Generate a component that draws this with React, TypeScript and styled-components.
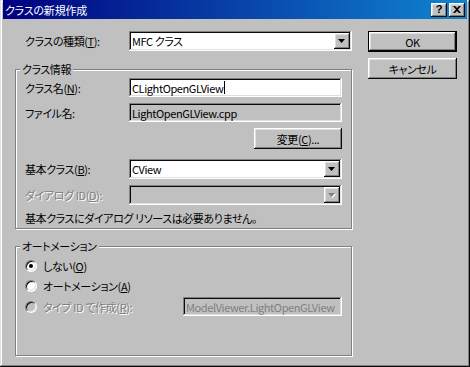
import styled, { createGlobalStyle } from 'styled-components';

const GlobalStyle = createGlobalStyle`
  html, body {
    margin: 0;
    padding: 0;
    background: #c0c0c0;
  }
  body {
    font-family: "Noto Sans CJK JP", "Liberation Sans", sans-serif;
    font-size: 11px;
    letter-spacing: -0.4px;
    font-feature-settings: "palt";
    color: #000;
  }
  u {
    text-underline-offset: 1px;
  }
`;

const raised = `
  box-shadow: inset -1px -1px #0a0a0a, inset 1px 1px #fff,
    inset -2px -2px #808080, inset 2px 2px #dfdfdf;
`;

const sunken = `
  box-shadow: inset -1px -1px #fff, inset 1px 1px #808080,
    inset -2px -2px #dfdfdf, inset 2px 2px #0a0a0a;
`;

const Window = styled.div`
  width: 470px;
  height: 367px;
  box-sizing: border-box;
  padding: 0 3px 3px 3px;
  background: #c0c0c0;
  box-shadow: inset -1px -1px #0a0a0a, inset 1px 1px #dfdfdf,
    inset -2px -2px #808080, inset 2px 2px #fff;
  display: flex;
  flex-direction: column;
`;

const TitleBar = styled.div`
  height: 19px;
  flex-shrink: 0;
  display: flex;
  align-items: center;
  justify-content: space-between;
  padding: 0 2px 0 2px;
  background: linear-gradient(90deg, #000080, #1084d0);
`;

const TitleText = styled.span`
  color: #fff;
  font-size: 11px;
  line-height: 14px;
  letter-spacing: -0.2px;
`;

const TitleButtons = styled.div`
  display: flex;
  gap: 2px;
`;

const TitleButton = styled.button`
  width: 16px;
  height: 14px;
  padding: 0;
  border: 0;
  background: #c0c0c0;
  ${raised}
  display: flex;
  align-items: center;
  justify-content: center;
  font: bold 11px "Liberation Sans", sans-serif;
  line-height: 11px;
  color: #000;
`;

const Body = styled.div`
  display: flex;
  padding: 12px 10px 0 12px;
`;

const Main = styled.div`
  width: 337px;
  display: flex;
  flex-direction: column;
`;

const Side = styled.div`
  margin-left: 16px;
  width: 89px;
  display: flex;
  flex-direction: column;
  gap: 6px;
`;

const FieldRow = styled.div<{ $mt?: number; $pl?: number }>`
  display: grid;
  grid-template-columns: 104px 1fr;
  align-items: center;
  margin-top: ${p => p.$mt ?? 0}px;
  padding-left: ${p => p.$pl ?? 0}px;
`;

const Label = styled.span<{ $disabled?: boolean }>`
  line-height: 14px;
  white-space: nowrap;
  color: ${p => (p.$disabled ? '#808080' : '#000')};
  text-shadow: ${p => (p.$disabled ? '1px 1px 0 #fff' : 'none')};
`;

const Field = styled.div<{ $gray?: boolean; $dim?: boolean; $w?: number }>`
  height: 19px;
  width: ${p => (p.$w ? `${p.$w}px` : 'auto')};
  box-sizing: border-box;
  padding: 2px 2px 2px 3px;
  background: ${p => (p.$gray ? '#c0c0c0' : '#fff')};
  color: ${p => (p.$dim ? '#808080' : '#000')};
  ${sunken}
  display: flex;
  align-items: center;
  line-height: 14px;
  white-space: nowrap;
  overflow: hidden;
`;

const Caret = styled.span`
  width: 1px;
  height: 13px;
  background: #000;
  margin-left: 1px;
`;

const Combo = styled(Field)`
  height: 20px;
  justify-content: space-between;
`;

const DropButton = styled.span`
  width: 16px;
  height: 16px;
  flex-shrink: 0;
  background: #c0c0c0;
  ${raised}
  display: flex;
  align-items: center;
  justify-content: center;
`;

const PushButton = styled.button<{ $default?: boolean; $w?: number }>`
  width: ${p => (p.$w ? `${p.$w}px` : '100%')};
  height: 21px;
  padding: 0;
  box-sizing: border-box;
  background: #c0c0c0;
  font: inherit;
  letter-spacing: inherit;
  line-height: 14px;
  color: #000;
  border: ${p => (p.$default ? '1px solid #000' : 'none')};
  ${raised}
`;

const ButtonRow = styled.div<{ $mt?: number }>`
  display: flex;
  justify-content: flex-end;
  margin-top: ${p => p.$mt ?? 0}px;
`;

const Group = styled.fieldset<{ $mt: number; $pb: number }>`
  margin: ${p => p.$mt}px 0 0 0;
  padding: 2px 9px ${p => p.$pb}px 9px;
  border: 1px solid #808080;
  box-shadow: inset 1px 1px #fff, 1px 1px #fff;
  min-width: 0;
`;

const GroupTitle = styled.legend`
  padding: 0 2px;
  margin-left: -5px;
  line-height: 14px;
  background: #c0c0c0;
`;

const Note = styled.div`
  margin-top: 6px;
  line-height: 14px;
  white-space: nowrap;
`;

const RadioRow = styled.div<{ $mt?: number; $h?: number }>`
  display: flex;
  align-items: center;
  height: ${p => p.$h ?? 14}px;
  margin-top: ${p => p.$mt ?? 0}px;
`;

const RadioLabel = styled.label<{ $disabled?: boolean }>`
  display: flex;
  align-items: center;
  gap: 6px;
  line-height: 14px;
  color: ${p => (p.$disabled ? '#808080' : '#000')};
  text-shadow: ${p => (p.$disabled ? '1px 1px 0 #fff' : 'none')};
`;

const RadioCircle = styled.span<{ $checked?: boolean; $disabled?: boolean }>`
  width: 12px;
  height: 12px;
  box-sizing: border-box;
  border-radius: 50%;
  border: 1px solid;
  border-color: #808080 #fff #fff #808080;
  box-shadow: inset 1px 1px #0a0a0a, inset -1px -1px #dfdfdf;
  background: ${p => (p.$disabled ? '#c0c0c0' : '#fff')};
  display: flex;
  align-items: center;
  justify-content: center;
  text-shadow: none;

  &::after {
    content: '';
    width: 4px;
    height: 4px;
    border-radius: 50%;
    background: #000;
    display: ${p => (p.$checked ? 'block' : 'none')};
  }
`;

const Spacer = styled.div`
  flex: 1;
`;

const DownArrow = ({ disabled }: { disabled?: boolean }) => (
  <svg width="8" height="5" viewBox="0 0 8 5">
    {disabled && <path d="M1 1h7L4.5 5z" fill="#fff" />}
    <path d="M0 0h7L3.5 4z" fill={disabled ? '#808080' : '#000'} />
  </svg>
);

const CloseGlyph = () => (
  <svg width="8" height="7" viewBox="0 0 8 7">
    <path d="M0 0h2l2 2 2-2h2L5 3.5 8 7H6L4 5 2 7H0l3-3.5z" fill="#000" />
  </svg>
);

const App = () => {
  return (
    <>
      <GlobalStyle />
      <Window>
        <TitleBar>
          <TitleText>クラスの新規作成</TitleText>
          <TitleButtons>
            <TitleButton>?</TitleButton>
            <TitleButton>
              <CloseGlyph />
            </TitleButton>
          </TitleButtons>
        </TitleBar>

        <Body>
          <Main>
            <FieldRow $pl={10}>
              <Label>クラスの種類(<u>T</u>):</Label>
              <Combo>
                <span>MFC クラス</span>
                <DropButton>
                  <DownArrow />
                </DropButton>
              </Combo>
            </FieldRow>

            <Group $mt={11} $pb={3}>
              <GroupTitle>クラス情報</GroupTitle>
              <FieldRow>
                <Label>クラス名(<u>N</u>):</Label>
                <Field>
                  CLightOpenGLView
                  <Caret />
                </Field>
              </FieldRow>
              <FieldRow $mt={6}>
                <Label>ファイル名:</Label>
                <Field $gray>LightOpenGLView.cpp</Field>
              </FieldRow>
              <ButtonRow $mt={6}>
                <PushButton $w={88}>
                  変更(<u>C</u>)...
                </PushButton>
              </ButtonRow>
              <FieldRow $mt={10}>
                <Label>基本クラス(<u>B</u>):</Label>
                <Combo>
                  <span>CView</span>
                  <DropButton>
                    <DownArrow />
                  </DropButton>
                </Combo>
              </FieldRow>
              <FieldRow $mt={6}>
                <Label $disabled>
                  ダイアログ ID(<u>D</u>):
                </Label>
                <Combo $gray>
                  <span />
                  <DropButton>
                    <DownArrow disabled />
                  </DropButton>
                </Combo>
              </FieldRow>
              <Note>基本クラスにダイアログ リソースは必要ありません。</Note>
            </Group>

            <Group $mt={10} $pb={39}>
              <GroupTitle>オートメーション</GroupTitle>
              <RadioRow $mt={4}>
                <RadioLabel>
                  <RadioCircle $checked />
                  <span>
                    しない(<u>O</u>)
                  </span>
                </RadioLabel>
              </RadioRow>
              <RadioRow $mt={6}>
                <RadioLabel>
                  <RadioCircle />
                  <span>
                    オートメーション(<u>A</u>)
                  </span>
                </RadioLabel>
              </RadioRow>
              <RadioRow $mt={4} $h={19}>
                <RadioLabel $disabled>
                  <RadioCircle $disabled />
                  <span>
                    タイプ ID で作成(<u>R</u>):
                  </span>
                </RadioLabel>
                <Spacer />
                <Field $gray $dim $w={159}>
                  ModelViewer.LightOpenGLView
                </Field>
              </RadioRow>
            </Group>
          </Main>

          <Side>
            <PushButton $default>OK</PushButton>
            <PushButton>キャンセル</PushButton>
          </Side>
        </Body>
      </Window>
    </>
  );
};

export default App;
